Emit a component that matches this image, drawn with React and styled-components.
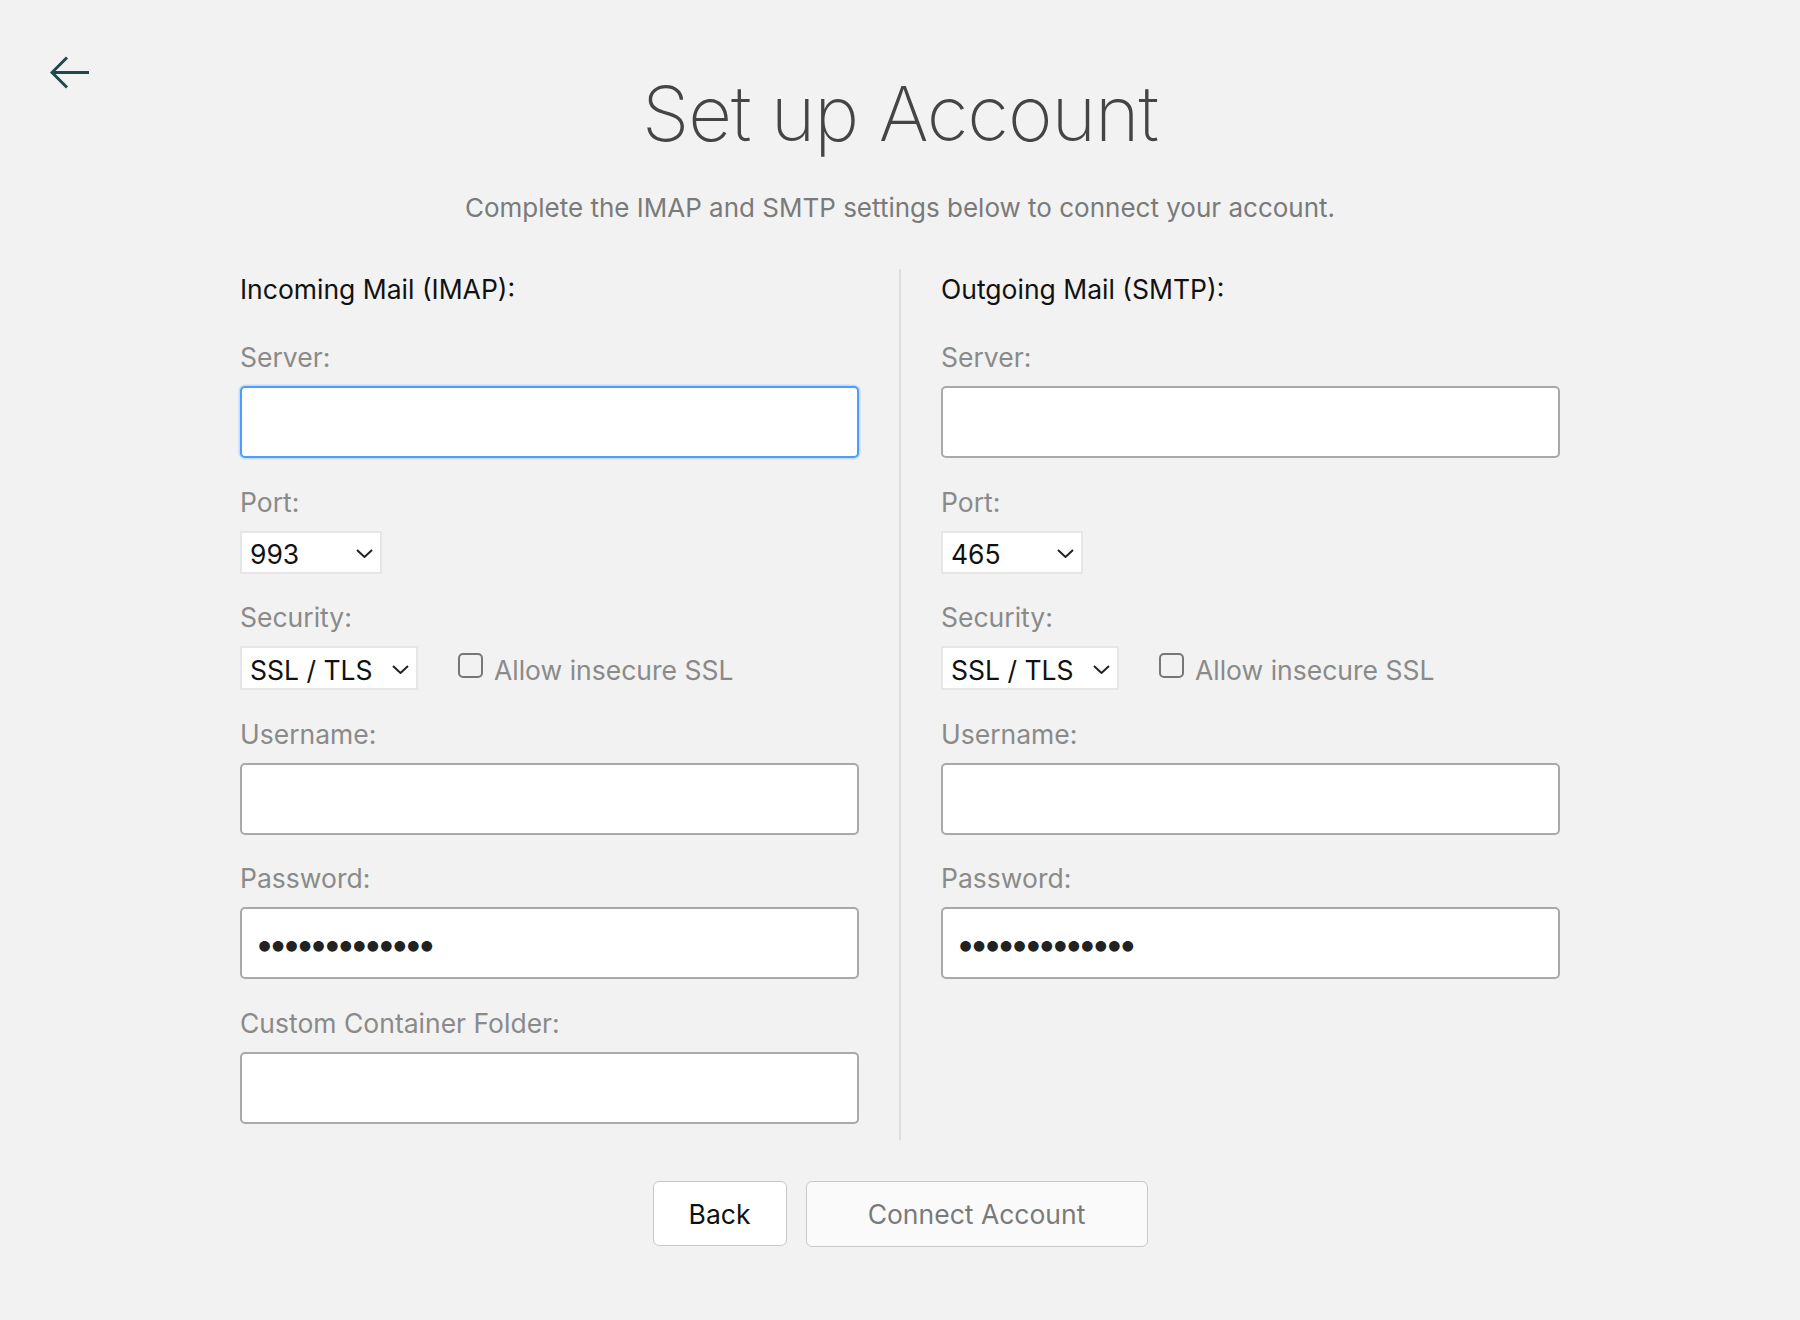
import React from 'react';
import styled, { createGlobalStyle } from 'styled-components';

const GlobalStyle = createGlobalStyle`
  body {
    margin: 0;
    background: #f2f2f2;
    font-family: "Inter", "Liberation Sans", sans-serif;
  }
`;

const Page = styled.div`
  min-height: 1320px;
  padding: 57px 50px 0;
  box-sizing: border-box;
`;

const Header = styled.header`
  display: grid;
  grid-template-columns: 1fr auto 1fr;
  align-items: start;
`;

const BackArrow = styled.button`
  width: 40px;
  height: 34px;
  padding: 0;
  border: none;
  background: none;
  cursor: pointer;
  display: flex;
  margin-top: -1px;
`;

const Title = styled.h1`
  margin: 11px 0 0;
  font-size: 76px;
  line-height: 90px;
  font-weight: 200;
  color: #454545;
  letter-spacing: -1px;
  text-align: center;
`;

const Subtitle = styled.p`
  margin: 34px 0 0;
  text-align: center;
  font-size: 26px;
  line-height: 32px;
  color: #7a7a7a;
`;

const Form = styled.div`
  display: grid;
  grid-template-columns: 619px 2px 619px;
  column-gap: 40px;
  justify-content: center;
  margin-top: 45px;
`;

const Divider = styled.div`
  background: #dcdcdc;
`;

const Column = styled.section`
  display: flex;
  flex-direction: column;
  padding: 4px 0 16px;
`;

const Heading = styled.h2`
  margin: 0 0 36px;
  font-size: 26.5px;
  line-height: 32px;
  font-weight: 400;
  color: #111;
`;

const Fields = styled.div`
  display: flex;
  flex-direction: column;
  gap: 27.6px;
`;

const Field = styled.div`
  display: flex;
  flex-direction: column;
  align-items: flex-start;
  gap: 13px;
`;

const Label = styled.label`
  font-size: 26.5px;
  line-height: 32px;
  color: #8a8a8a;
`;

const Input = styled.input`
  width: 100%;
  height: 72px;
  box-sizing: border-box;
  padding: 0 16px;
  background: #fff;
  border: 2px solid ${p => (p.$focused ? '#4a9eff' : '#a9a9a9')};
  box-shadow: ${p => (p.$focused ? '0 0 0 1.5px rgba(74, 158, 255, 0.25)' : 'none')};
  border-radius: 5px;
  font-family: inherit;
  font-size: 26px;
  color: #222;
  outline: none;

  &[type='password'] {
    font-size: 34px;
    letter-spacing: -5.6px;
    padding-left: 13px;
  }
`;

const SelectWrap = styled.div`
  position: relative;
  width: ${p => p.$width}px;
  height: ${p => p.$height}px;
`;

const Select = styled.select`
  appearance: none;
  width: 100%;
  height: 100%;
  box-sizing: border-box;
  padding: 3px 40px 0 8px;
  background: #fff;
  border: 2px solid #e6e6e6;
  border-radius: 0;
  font-family: inherit;
  font-size: 26.5px;
  color: #111;
  outline: none;
`;

const Chevron = styled.svg`
  position: absolute;
  right: 9px;
  top: 50%;
  margin-top: -3px;
  pointer-events: none;
`;

const SecurityRow = styled.div`
  display: flex;
  align-items: center;
  gap: 40px;
`;

const CheckLabel = styled.label`
  display: flex;
  align-items: center;
  gap: 11px;
  font-size: 26.5px;
  color: #8a8a8a;
  padding-top: 3px;
`;

const Checkbox = styled.input`
  appearance: none;
  margin: -8px 0 0;
  width: 25px;
  height: 25px;
  border: 2px solid #777;
  border-radius: 5px;
  background: transparent;
`;

const Actions = styled.div`
  display: flex;
  justify-content: center;
  align-items: center;
  gap: 19px;
  margin-top: 41px;
`;

const Button = styled.button`
  height: ${p => (p.$primary ? 66 : 65)}px;
  width: ${p => (p.$primary ? 342 : 134)}px;
  box-sizing: border-box;
  border: 1px solid #c8c8c8;
  border-radius: 6px;
  background: ${p => (p.$primary ? '#fafafa' : '#fff')};
  color: ${p => (p.$primary ? '#7a7a7a' : '#111')};
  font-family: inherit;
  font-size: 26.5px;
  cursor: pointer;
`;

const ChevronIcon = () => (
  <Chevron width="17" height="9" viewBox="0 0 17 9">
    <path d="M1 1l7.5 7L16 1" fill="none" stroke="#222" strokeWidth="2" />
  </Chevron>
);

const Dropdown = ({ width, height, value, options }) => (
  <SelectWrap $width={width} $height={height}>
    <Select defaultValue={value}>
      {options.map(o => (
        <option key={o}>{o}</option>
      ))}
    </Select>
    <ChevronIcon />
  </SelectWrap>
);

const MailColumn = ({ title, port, ports, focused, withFolder }) => (
  <Column>
    <Heading>{title}</Heading>
    <Fields>
      <Field>
        <Label>Server:</Label>
        <Input type="text" $focused={focused} />
      </Field>
      <Field>
        <Label>Port:</Label>
        <Dropdown width={142} height={43} value={port} options={ports} />
      </Field>
      <Field>
        <Label>Security:</Label>
        <SecurityRow>
          <Dropdown width={178} height={44} value="SSL / TLS" options={['SSL / TLS', 'STARTTLS', 'None']} />
          <CheckLabel>
            <Checkbox type="checkbox" />
            Allow insecure SSL
          </CheckLabel>
        </SecurityRow>
      </Field>
      <Field>
        <Label>Username:</Label>
        <Input type="text" />
      </Field>
      <Field>
        <Label>Password:</Label>
        <Input type="password" defaultValue="1234567890123" />
      </Field>
      {withFolder && (
        <Field>
          <Label>Custom Container Folder:</Label>
          <Input type="text" />
        </Field>
      )}
    </Fields>
  </Column>
);

export default function App() {
  return (
    <>
      <GlobalStyle />
      <Page>
        <Header>
          <BackArrow aria-label="Back">
            <svg width="40" height="34" viewBox="0 0 40 34">
              <path d="M39 16.5H3M17 1.5L2 16.5l15 15" fill="none" stroke="#1e4a4b" strokeWidth="3" />
            </svg>
          </BackArrow>
          <Title>Set up Account</Title>
          <div />
        </Header>
        <Subtitle>Complete the IMAP and SMTP settings below to connect your account.</Subtitle>
        <Form>
          <MailColumn title="Incoming Mail (IMAP):" port="993" ports={['993', '143']} focused withFolder />
          <Divider />
          <MailColumn title="Outgoing Mail (SMTP):" port="465" ports={['465', '587', '25']} />
        </Form>
        <Actions>
          <Button>Back</Button>
          <Button $primary>Connect Account</Button>
        </Actions>
      </Page>
    </>
  );
}
